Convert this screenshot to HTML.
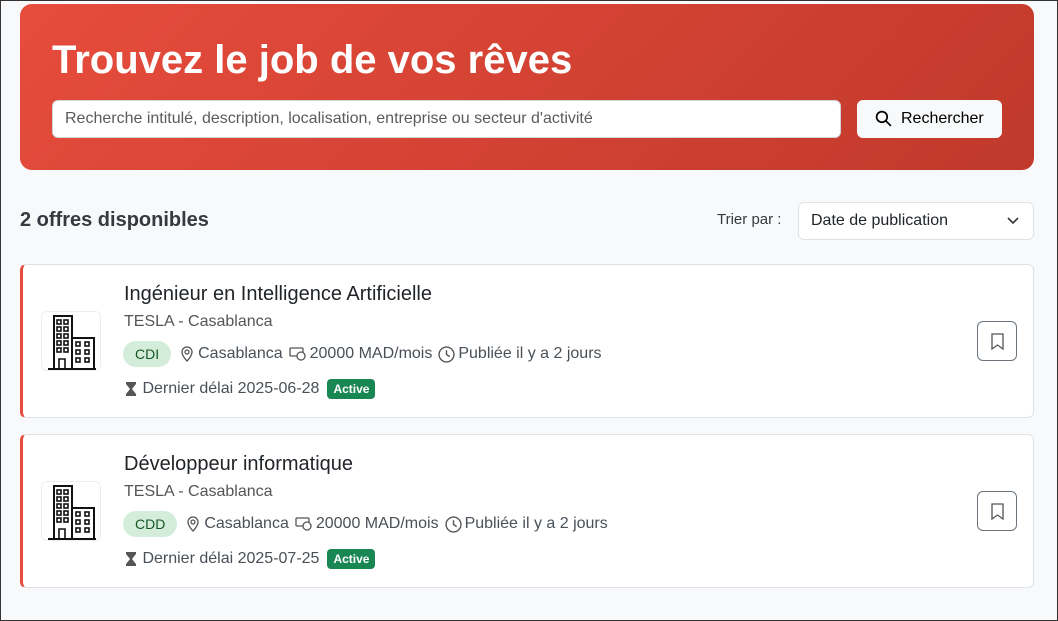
<!DOCTYPE html>
<html><head><meta charset="utf-8"><style>
*{box-sizing:border-box;margin:0;padding:0}
body{width:1058px;height:621px;background:#f8f9fa;font-family:"Liberation Sans",Arial,sans-serif;color:#212529;position:relative;overflow:hidden}
.frame{position:absolute;left:0;top:0;width:1058px;height:621px;border:1px solid #333;pointer-events:none}
.hero{position:absolute;left:20px;top:4px;width:1014px;height:166px;border-radius:12px;background:linear-gradient(135deg,#e74c3c,#c0392b)}
.hero h1{position:absolute;left:32px;top:34px;font-size:40px;color:#fff;font-weight:bold}
.inp{position:absolute;left:32px;top:96px;width:789px;height:38px;background:#fff;border:1px solid #ced4da;border-radius:6px;font-size:16px;color:#595c5f;padding:9px 12px}
.btn{position:absolute;left:837px;top:96px;width:145px;height:38px;background:#f8f9fa;border-radius:6px;font-size:16px;color:#000;padding:10px 0 0 44px}
.btn svg{position:absolute;left:18px;top:10px}
.cnt{position:absolute;left:20px;top:209px;font-size:20px;font-weight:bold;color:#343a40}
.sortl{position:absolute;left:717px;top:211px;font-size:15px;color:#343a40}
.sel{position:absolute;left:798px;top:202px;width:236px;height:38px;background:#fff;border:1px solid #dee2e6;border-radius:6px;font-size:16px;padding:9px 12px;color:#212529}
.sel svg{position:absolute;right:14px;top:14px}
.card{position:absolute;left:20px;width:1014px;height:154px;background:#fff;border:1px solid #dee2e6;border-left:3px solid #e74c3c;border-radius:6px}
.logo{position:absolute;left:18px;top:46px;width:60px;height:60px;border:1px solid #eee;border-radius:6px;background:#fff}
.logo svg{position:absolute;left:2px;top:2px}
.t{position:absolute;left:101px;top:18px;font-size:20px;color:#212529}
.co{position:absolute;left:101px;top:48px;font-size:16px;color:#555}
.row{position:absolute;left:100px;top:76px;font-size:16px;color:#495057;display:flex;align-items:center;white-space:nowrap}
.badge{background:#d4edda;color:#155724;border-radius:14px;padding:5px 12px;font-size:14px;margin-right:8px}
.row svg{margin-right:3px}
.row span.g{margin-right:6px}
.row2{position:absolute;left:101px;top:114px;font-size:16px;color:#495057;display:flex;align-items:center}
.act{background:#198754;color:#fff;font-size:12px;font-weight:bold;border-radius:4px;padding:3px 6px;margin-left:8px}
.bm{position:absolute;left:954px;top:56px;width:40px;height:40px;border:1px solid #6c757d;border-radius:6px}
.bm svg{position:absolute;left:13px;top:11px}
</style></head><body>
<div class="hero"><h1>Trouvez le job de vos rêves</h1>
<div class="inp">Recherche intitulé, description, localisation, entreprise ou secteur d'activité</div>
<div class="btn"><svg width="17" height="17" viewBox="0 0 16 16" fill="none" stroke="#000" stroke-width="1.6"><circle cx="6.5" cy="6.5" r="5"/><path d="M10.2 10.2L15 15"/></svg>Rechercher</div></div>
<div class="cnt">2 offres disponibles</div>
<div class="sortl">Trier par :</div>
<div class="sel">Date de publication<svg width="12" height="8" viewBox="0 0 12 8" fill="none" stroke="#333" stroke-width="1.6"><path d="M1 1l5 5 5-5"/></svg></div>

<div class="card" style="top:264px">
<div class="logo"><svg width="54" height="56" viewBox="0 0 54 56" fill="none" stroke="#111" stroke-width="2"><rect x="10" y="2" width="18" height="54"/><rect x="28" y="24" width="22" height="32"/><path d="M4 55h48"/><g stroke-width="1.6"><rect x="13" y="6" width="4" height="4"/><rect x="20" y="6" width="4" height="4"/><rect x="13" y="13" width="4" height="4"/><rect x="20" y="13" width="4" height="4"/><rect x="13" y="20" width="4" height="4"/><rect x="20" y="20" width="4" height="4"/><rect x="13" y="27" width="4" height="4"/><rect x="20" y="27" width="4" height="4"/><rect x="13" y="34" width="4" height="4"/><rect x="20" y="34" width="4" height="4"/><path d="M15 55v-10h6v10"/><rect x="32" y="28" width="4" height="4"/><rect x="41" y="28" width="4" height="4"/><rect x="32" y="36" width="4" height="4"/><rect x="41" y="36" width="4" height="4"/><rect x="32" y="44" width="4" height="4"/><rect x="41" y="44" width="4" height="4"/></g></svg></div>
<div class="t">Ingénieur en Intelligence Artificielle</div>
<div class="co">TESLA - Casablanca</div>
<div class="row"><span class="badge">CDI</span><svg width="16" height="16" viewBox="0 0 16 16" fill="none" stroke="#555" stroke-width="1.3"><path d="M8 15s5-5 5-9a5 5 0 0 0-10 0c0 4 5 9 5 9z"/><circle cx="8" cy="6" r="2"/></svg><span class="g">Casablanca</span><svg width="18" height="16" viewBox="0 0 18 16" fill="none" stroke="#555" stroke-width="1.3"><rect x="1" y="2" width="13" height="8" rx="1"/><circle cx="12" cy="10" r="4" fill="#fff"/></svg><span class="g">20000 MAD/mois</span><svg width="17" height="17" viewBox="0 0 16 16" fill="none" stroke="#555" stroke-width="1.3"><circle cx="8" cy="8" r="7"/><path d="M8 4v4l3 2"/></svg><span>Publiée il y a 2 jours</span></div>
<div class="row2"><svg width="14" height="16" viewBox="0 0 14 16" fill="#555"><path d="M2 1h10v2L8 8l4 5v2H2v-2l4-5-4-5z"/></svg>&nbsp;Dernier délai 2025-06-28<span class="act">Active</span></div>
<div class="bm"><svg width="13" height="17" viewBox="0 0 13 17" fill="none" stroke="#555" stroke-width="1.3"><path d="M1 1h11v15l-5.5-4L1 16z"/></svg></div>
</div>

<div class="card" style="top:434px">
<div class="logo"><svg width="54" height="56" viewBox="0 0 54 56" fill="none" stroke="#111" stroke-width="2"><rect x="10" y="2" width="18" height="54"/><rect x="28" y="24" width="22" height="32"/><path d="M4 55h48"/><g stroke-width="1.6"><rect x="13" y="6" width="4" height="4"/><rect x="20" y="6" width="4" height="4"/><rect x="13" y="13" width="4" height="4"/><rect x="20" y="13" width="4" height="4"/><rect x="13" y="20" width="4" height="4"/><rect x="20" y="20" width="4" height="4"/><rect x="13" y="27" width="4" height="4"/><rect x="20" y="27" width="4" height="4"/><rect x="13" y="34" width="4" height="4"/><rect x="20" y="34" width="4" height="4"/><path d="M15 55v-10h6v10"/><rect x="32" y="28" width="4" height="4"/><rect x="41" y="28" width="4" height="4"/><rect x="32" y="36" width="4" height="4"/><rect x="41" y="36" width="4" height="4"/><rect x="32" y="44" width="4" height="4"/><rect x="41" y="44" width="4" height="4"/></g></svg></div>
<div class="t">Développeur informatique</div>
<div class="co">TESLA - Casablanca</div>
<div class="row"><span class="badge">CDD</span><svg width="16" height="16" viewBox="0 0 16 16" fill="none" stroke="#555" stroke-width="1.3"><path d="M8 15s5-5 5-9a5 5 0 0 0-10 0c0 4 5 9 5 9z"/><circle cx="8" cy="6" r="2"/></svg><span class="g">Casablanca</span><svg width="18" height="16" viewBox="0 0 18 16" fill="none" stroke="#555" stroke-width="1.3"><rect x="1" y="2" width="13" height="8" rx="1"/><circle cx="12" cy="10" r="4" fill="#fff"/></svg><span class="g">20000 MAD/mois</span><svg width="17" height="17" viewBox="0 0 16 16" fill="none" stroke="#555" stroke-width="1.3"><circle cx="8" cy="8" r="7"/><path d="M8 4v4l3 2"/></svg><span>Publiée il y a 2 jours</span></div>
<div class="row2"><svg width="14" height="16" viewBox="0 0 14 16" fill="#555"><path d="M2 1h10v2L8 8l4 5v2H2v-2l4-5-4-5z"/></svg>&nbsp;Dernier délai 2025-07-25<span class="act">Active</span></div>
<div class="bm"><svg width="13" height="17" viewBox="0 0 13 17" fill="none" stroke="#555" stroke-width="1.3"><path d="M1 1h11v15l-5.5-4L1 16z"/></svg></div>
</div>
<div class="frame"></div>
</body></html>
